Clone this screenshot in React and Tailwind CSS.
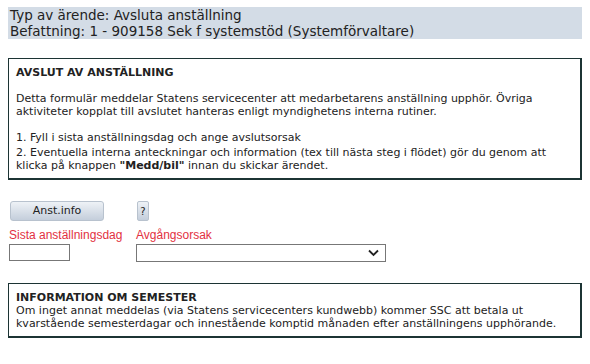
import { useState } from 'react'

const font = "font-['DejaVu_Sans',Verdana,sans-serif]"

function InfoBox({ children, className = '' }) {
  return (
    <div className={`mx-2 border-t border-l border-r-2 border-b-2 border-[#1c3434] bg-white ${className}`}>
      {children}
    </div>
  )
}

export default function App() {
  const [date, setDate] = useState('')
  const [reason, setReason] = useState('')

  return (
    <div className={`min-h-[364px] w-[590px] bg-white pt-[7px] text-[#222] ${font}`}>
      <div className="mx-2 bg-[#d3dce6] px-[2px] text-[13.5px] leading-[16px]">
        <p>Typ av ärende: Avsluta anställning</p>
        <p>Befattning: 1 - 909158 Sek f systemstöd (Systemförvaltare)</p>
      </div>

      <InfoBox className="mt-[19px] px-[7px] pt-[7px] pb-[6px] text-[11px] leading-[13px]">
        <p className="font-bold">AVSLUT AV ANSTÄLLNING</p>
        <p className="mt-[13px]">
          Detta formulär meddelar Statens servicecenter att medarbetarens anställning upphör. Övriga
          aktiviteter kopplat till avslutet hanteras enligt myndighetens interna rutiner.
        </p>
        <p className="mt-[13px]">1. Fyll i sista anställningsdag och ange avslutsorsak</p>
        <p className="mt-[2px]">
          2. Eventuella interna anteckningar och information (tex till nästa steg i flödet) gör du genom att
          klicka på knappen <b>"Medd/bil"</b> innan du skickar ärendet.
        </p>
      </InfoBox>

      <div className="mt-[21px] flex items-center pl-[10px]">
        <button className="h-[20px] w-[94px] rounded-[3px] border border-[#b8c2ce] bg-gradient-to-b from-[#eef2f6] to-[#c4cedb] text-[11px] text-[#222]">
          Anst.info
        </button>
        <button className="ml-[33px] h-[20px] w-[12px] rounded-[2px] border border-[#b8c2ce] bg-gradient-to-b from-[#eef2f6] to-[#c4cedb] text-[10px] text-[#222]">
          ?
        </button>
      </div>

      <div className="mt-[7px] flex pl-[9px] font-['Liberation_Sans',Arial,sans-serif] text-[12px] leading-[15px] text-[#e2313f]">
        <label className="flex w-[127px] flex-col whitespace-nowrap">
          <span>Sista anställningsdag</span>
          <input
            value={date}
            onChange={e => setDate(e.target.value)}
            className="mt-[1px] h-[17px] w-[61px] border border-[#777] bg-white px-1 text-[11px] text-[#222] outline-none"
          />
        </label>
        <label className="flex flex-col whitespace-nowrap">
          <span>Avgångsorsak</span>
          <span className="relative mt-[1px] block h-[18px] w-[250px]">
            <select
              value={reason}
              onChange={e => setReason(e.target.value)}
              className="h-[18px] w-full appearance-none border border-[#777] bg-white text-[11px] text-[#222] outline-none"
            >
              <option value=""></option>
            </select>
            <svg className="pointer-events-none absolute right-[7px] top-[5px]" width="11" height="8" viewBox="0 0 11 8">
              <path d="M1 1.5 L5.5 6 L10 1.5" fill="none" stroke="#222" strokeWidth="1.8" />
            </svg>
          </span>
        </label>
      </div>

      <InfoBox className="mt-[21px] px-[7px] pt-[7px] pb-[6px] text-[11px] leading-[13px]">
        <p className="font-bold">INFORMATION OM SEMESTER</p>
        <p>
          Om inget annat meddelas (via Statens servicecenters kundwebb) kommer SSC att betala ut
          kvarstående semesterdagar och innestående komptid månaden efter anställningens upphörande.
        </p>
      </InfoBox>
    </div>
  )
}
